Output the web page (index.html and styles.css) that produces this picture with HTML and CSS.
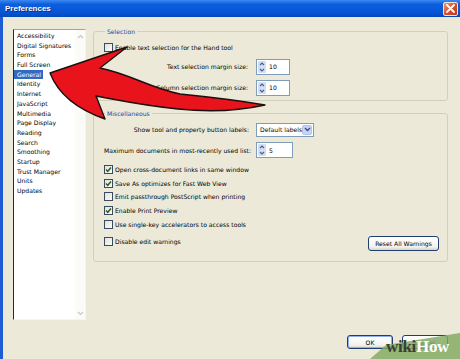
FILE: index.html
```html
<!DOCTYPE html>
<html lang="en">
<head>
  <meta charset="UTF-8" />
  <title>Preferences</title>
  <link rel="stylesheet" href="styles.css">
</head>
<body>
  <div class="window">
    <div class="titlebar">
      <span class="title">Preferences</span>
      <span class="close">
        <svg width="9" height="9" viewBox="0 0 9 9"><path d="M1 1 L8 8 M8 1 L1 8" stroke="#fff" stroke-width="1.8" stroke-linecap="round"/></svg>
      </span>
    </div>
    <div class="frame">
      <div class="main">
        <div class="sidebar">
          <ul class="list">
            <li>Accessibility</li>
            <li>Digital Signatures</li>
            <li>Forms</li>
            <li>Full Screen</li>
            <li class="selected">General</li>
            <li>Identity</li>
            <li>Internet</li>
            <li>JavaScript</li>
            <li>Multimedia</li>
            <li>Page Display</li>
            <li>Reading</li>
            <li>Search</li>
            <li>Smoothing</li>
            <li>Startup</li>
            <li>Trust Manager</li>
            <li>Units</li>
            <li>Updates</li>
          </ul>
          <div class="scroll">
            <svg width="7" height="5" viewBox="0 0 7 5"><path d="M1 4 L3.5 1.5 L6 4" fill="none" stroke="#c9c7bd" stroke-width="1.2"/></svg>
            <svg width="7" height="5" viewBox="0 0 7 5"><path d="M1 1 L3.5 3.5 L6 1" fill="none" stroke="#c9c7bd" stroke-width="1.2"/></svg>
          </div>
        </div>

        <div class="panel">
          <fieldset class="group selection">
            <legend>Selection</legend>
            <div class="row check-row first">
              <span class="check"></span>
              <span>Enable text selection for the Hand tool</span>
            </div>
            <div class="row field-row">
              <span class="label">Text selection margin size:</span>
              <span class="spin">
                <span class="spin-btns"><svg width="8" height="14" viewBox="0 0 8 14"><path d="M2 5 L4 3 L6 5 M2 9 L4 11 L6 9" fill="none" stroke="#4d6185" stroke-width="1.2"/></svg></span>
                <span>10</span>
              </span>
            </div>
            <div class="row field-row second">
              <span class="label">Column selection margin size:</span>
              <span class="spin">
                <span class="spin-btns"><svg width="8" height="14" viewBox="0 0 8 14"><path d="M2 5 L4 3 L6 5 M2 9 L4 11 L6 9" fill="none" stroke="#4d6185" stroke-width="1.2"/></svg></span>
                <span>10</span>
              </span>
            </div>
          </fieldset>

          <fieldset class="group misc">
            <legend>Miscellaneous</legend>
            <div class="row select-row">
              <span class="label">Show tool and property button labels:</span>
              <span class="select">
                <span>Default labels</span>
                <span class="select-btn"><svg width="7" height="5" viewBox="0 0 7 5"><path d="M1 1 L3.5 3.5 L6 1" fill="none" stroke="#3c4f7a" stroke-width="1.4"/></svg></span>
              </span>
            </div>
            <div class="row field-row">
              <span class="label left">Maximum documents in most-recently used list:</span>
              <span class="spin wide">
                <span class="spin-btns"><svg width="8" height="14" viewBox="0 0 8 14"><path d="M2 5 L4 3 L6 5 M2 9 L4 11 L6 9" fill="none" stroke="#4d6185" stroke-width="1.2"/></svg></span>
                <span>5</span>
              </span>
            </div>
            <div class="row check-row list-first">
              <span class="check checked"><svg width="7" height="7" viewBox="0 0 7 7"><path d="M1 3.5 L2.8 5.3 L6 1.6" fill="none" stroke="#2d5e22" stroke-width="1.5"/></svg></span>
              <span>Open cross-document links in same window</span>
            </div>
            <div class="row check-row">
              <span class="check checked"><svg width="7" height="7" viewBox="0 0 7 7"><path d="M1 3.5 L2.8 5.3 L6 1.6" fill="none" stroke="#2d5e22" stroke-width="1.5"/></svg></span>
              <span>Save As optimizes for Fast Web View</span>
            </div>
            <div class="row check-row">
              <span class="check"></span>
              <span>Emit passthrough PostScript when printing</span>
            </div>
            <div class="row check-row">
              <span class="check checked"><svg width="7" height="7" viewBox="0 0 7 7"><path d="M1 3.5 L2.8 5.3 L6 1.6" fill="none" stroke="#2d5e22" stroke-width="1.5"/></svg></span>
              <span>Enable Print Preview</span>
            </div>
            <div class="row check-row">
              <span class="check"></span>
              <span>Use single-key accelerators to access tools</span>
            </div>
            <div class="row last-row">
              <div class="check-row inline">
                <span class="check"></span>
                <span>Disable edit warnings</span>
              </div>
              <button class="btn reset">Reset All Warnings</button>
            </div>
          </fieldset>
        </div>
      </div>

      <div class="footer">
        <button class="btn default">OK</button>
        <button class="btn">Cancel</button>
      </div>
    </div>
  </div>

  <!-- red pointer drawn on top of the dialog -->
  <svg class="arrow" width="460" height="359" viewBox="0 0 460 359">
    <path d="M50 73 L127 47 L100 68 C130 74 150 88 180 94 Q230 99 265 105 Q225 114 178 109 C140 105 118 100 96 96 L105 119 Q62 104 50 73 Z"
          fill="#e8131b" stroke="#1a1010" stroke-width="1.4" stroke-linejoin="round"/>
    <polygon points="370,359 386,345 460,333 460,359" fill="rgba(128,170,96,0.82)"/>
  </svg>
  <div class="watermark"><span class="wiki">wiki</span><span class="how">How</span></div>
</body>
</html>
```

FILE: styles.css
```css
* {
  box-sizing: border-box;
}
body {
  margin: 0;
  position: relative;
  width: 460px;
  height: 359px;
  overflow: hidden;
  background: #ece9d8;
  font-family: "DejaVu Sans", Verdana, sans-serif;
  font-size: 6.1px;
  color: #000;
}
.window {
  width: 460px;
  height: 359px;
  display: flex;
  flex-direction: column;
}
.titlebar {
  height: 17px;
  display: flex;
  align-items: center;
  justify-content: space-between;
  padding: 0 2px 0 5px;
  background: linear-gradient(#3f88f2, #0b5fdd 25%, #0656d6 70%, #0447bd);
}
.title {
  color: #fff;
  font-family: "Liberation Sans", Arial, sans-serif;
  font-weight: bold;
  font-size: 8px;
  text-shadow: 1px 1px 0 #0a2a7a;
}
.close {
  width: 15px;
  height: 14px;
  display: flex;
  align-items: center;
  justify-content: center;
  border: 1px solid #f2e2dc;
  border-radius: 2px;
  background: linear-gradient(135deg, #ec9a7e, #d4522d 50%, #c0391a);
}
.frame {
  flex: 1;
  display: flex;
  flex-direction: column;
  border-left: 3px solid #1f5bd2;
}
.main {
  display: flex;
  gap: 7px;
  padding: 12px 12px 0 10px;
}
.sidebar {
  width: 73px;
  height: 291px;
  display: flex;
  background: #fff;
  border: 1px solid;
  border-color: #a5a397 #f6f5f0 #f6f5f0 #2a2a2a;
}
.list {
  list-style: none;
  margin: 0;
  padding: 1px 0 0 0;
  flex: 1;
}
.list li {
  width: fit-content;
  height: 9.7px;
  line-height: 9.7px;
  padding: 0 2px 0 3px;
  white-space: nowrap;
}
.list li.selected {
  background: #316ac5;
  color: #fff;
}
.scroll {
  width: 10px;
  display: flex;
  flex-direction: column;
  justify-content: space-between;
  align-items: center;
  padding: 4px 0 3px;
  background: #fbfbf8;
}
.panel {
  width: 355px;
  display: flex;
  flex-direction: column;
  margin-top: -1px;
}
.group {
  margin: 0;
  min-width: 0;
  border: 1px solid #d0d0bf;
  border-radius: 3px;
  padding: 0 8px 0 10px;
}
.group legend {
  color: #2447a8;
  padding: 0 2px;
  margin-left: 1px;
  line-height: 7.5px;
}
.selection {
  padding-top: 7px;
  padding-bottom: 4px;
}
.misc {
  margin-top: 9px;
  padding-top: 5px;
  padding-bottom: 9px;
}
.row {
  display: flex;
  align-items: center;
  white-space: nowrap;
}
.check-row {
  display: flex;
  align-items: center;
  gap: 2px;
  height: 13.7px;
}
.check-row.first {
  height: 10px;
}
.field-row {
  height: 16px;
  margin-top: 6px;
  gap: 8px;
}
.field-row.second {
  margin-top: 5px;
}
.select-row {
  height: 15px;
  gap: 7px;
}
.misc .field-row {
  margin-top: 5px;
  gap: 7px;
}
.list-first {
  margin-top: 4.5px;
}
.label {
  width: 144px;
  text-align: right;
}
.select-row .label {
  width: 145px;
}
.label.left {
  width: 145px;
  text-align: left;
}
.check {
  width: 9px;
  height: 9px;
  flex: none;
  display: flex;
  align-items: center;
  justify-content: center;
  border: 1px solid #3a4a60;
  background: linear-gradient(135deg, #e2e1da, #fbfbf8);
}
.spin {
  width: 34px;
  height: 16px;
  display: flex;
  align-items: center;
  gap: 3px;
  padding: 1px;
  border: 1px solid #7f9db9;
  background: #fff;
}
.spin.wide {
  width: 37px;
}
.spin-btns {
  width: 8px;
  height: 100%;
  display: flex;
  align-items: center;
  background: #d2def6;
  border-radius: 1px;
}
.select {
  width: 58px;
  height: 14px;
  display: flex;
  align-items: center;
  justify-content: space-between;
  padding: 0 1px 0 3px;
  border: 1px solid #7f9db9;
  background: #fff;
}
.select-btn {
  width: 11px;
  height: 10px;
  display: flex;
  align-items: center;
  justify-content: center;
  background: #c3d4f8;
  border: 1px solid #b2c4ee;
  border-radius: 2px;
}
.last-row {
  height: 16px;
  margin-top: 5px;
  justify-content: space-between;
  align-items: flex-start;
}
.check-row.inline {
  height: 11px;
}
.btn {
  font: inherit;
  color: #000;
  height: 14px;
  width: 46px;
  padding: 0;
  border: 1px solid #1d3f72;
  border-radius: 3px;
  background: linear-gradient(#ffffff, #f4f3ee 75%, #d8d3c6);
}
.btn.reset {
  width: 71px;
  height: 15px;
}
.btn.default {
  box-shadow: inset 0 0 0 1px #8fb0ef;
}
.footer {
  margin-top: auto;
  display: flex;
  justify-content: flex-end;
  gap: 9px;
  padding: 0 12px 10px 0;
}
.arrow {
  position: absolute;
  left: 0;
  top: 0;
  pointer-events: none;
}
.watermark {
  position: absolute;
  left: 386px;
  top: 338px;
  font-family: "Liberation Serif", serif;
  font-weight: bold;
  font-size: 17px;
  line-height: 18px;
  letter-spacing: -0.3px;
}
.watermark .wiki {
  color: #3b4034;
}
.watermark .how {
  color: #fff;
}
```
